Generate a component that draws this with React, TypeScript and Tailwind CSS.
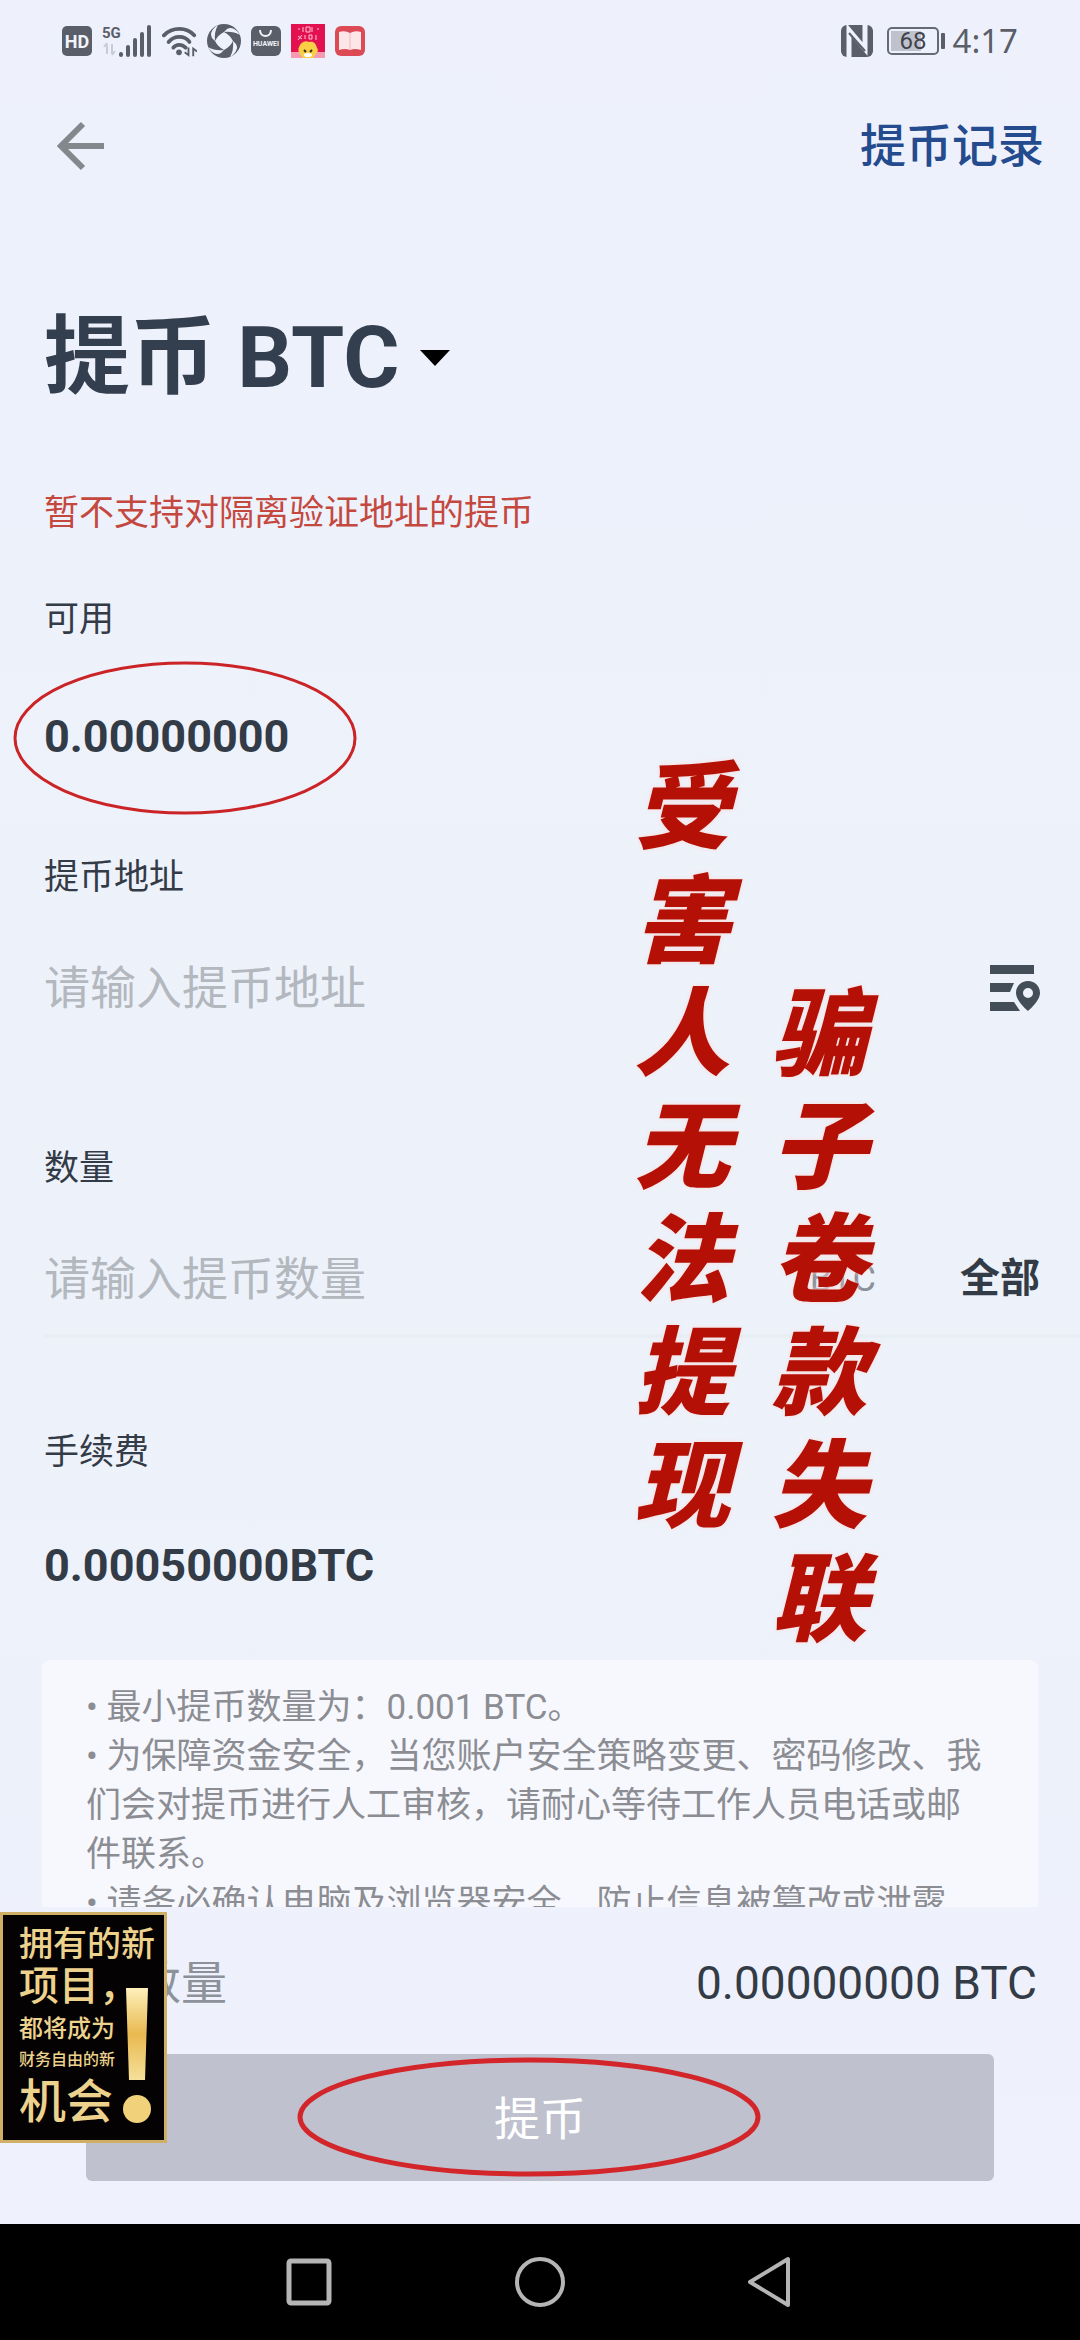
/**
 * Withdraw Page
 * Coin withdrawal form with notes, total and overlay annotations
 */

import type { ReactNode } from 'react'

const notes = [
  '最小提币数量为：0.001 BTC。',
  '为保障资金安全，当您账户安全策略变更、密码修改、我们会对提币进行人工审核，请耐心等待工作人员电话或邮件联系。',
  '请务必确认电脑及浏览器安全，防止信息被篡改或泄露',
]

function StatusBar() {
  return (
    <div className="flex items-center justify-between px-[62px] h-[82px] text-[#5a5e68]">
      <div className="flex items-center gap-[10px]">
        {/* HD */}
        <svg width="30" height="30" viewBox="0 0 30 30">
          <rect width="30" height="30" rx="5" fill="#5a5e68" />
          <text x="15" y="22" textAnchor="middle" fontSize="18" fontWeight="700" fill="#f2f4fc">HD</text>
        </svg>
        {/* 5G signal */}
        <svg width="50" height="34" viewBox="0 0 50 34">
          <text x="0" y="14" fontSize="15" fontWeight="700" fill="#5a5e68">5G</text>
          <path d="M5 20v10M2 23l3-4M10 20v10M13 27l-3 4" stroke="#c9ccd6" strokeWidth="2" fill="none" />
          <path d="M19 30v1M26 23v8M33 16v15M40 10v21M47 3v28" stroke="#5a5e68" strokeWidth="4" strokeLinecap="round" />
        </svg>
        {/* Wifi */}
        <svg width="35" height="34" viewBox="0 0 37 34">
          <g fill="none" stroke="#5a5e68" strokeWidth="4" strokeLinecap="round">
            <path d="M2 11C11 2 26 2 34 11" />
            <path d="M7 18c6-7 17-7 22 0" />
            <path d="M12 24c3-4 9-4 13 0" />
          </g>
          <circle cx="18" cy="29" r="3" fill="#5a5e68" />
          <path d="M28 24v8l-4-3M33 33v-8l4 3" stroke="#5a5e68" strokeWidth="2" fill="none" />
        </svg>
        {/* Shutter */}
        <svg width="34" height="34" viewBox="0 0 34 34">
          <circle cx="17" cy="17" r="17" fill="#5a5e68" />
          <g fill="#eef2fc">
            <path d="M17 8q6 3 9 9q-3 6-9 9q-6-3-9-9q3-6 9-9z" />
            <path d="M8 17Q7 8 11 1L8 3Q2 9 5 14z" />
            <path d="M17 8Q26 7 33 11L31 8Q25 2 20 5z" />
            <path d="M26 17Q27 26 23 33L26 31Q32 25 29 20z" />
            <path d="M17 26Q8 27 1 23L3 26Q9 32 14 29z" />
          </g>
        </svg>
        {/* Huawei store */}
        <svg width="30" height="30" viewBox="0 0 30 30">
          <rect width="30" height="30" rx="6" fill="#5a5e68" />
          <path d="M9 4c0 8 11 8 11 0" fill="none" stroke="#f2f4fc" strokeWidth="2" />
          <text x="15" y="20" textAnchor="middle" fontSize="7" fontWeight="700" fill="#f2f4fc">HUAWEI</text>
        </svg>
        {/* Shopping app */}
        <svg width="34" height="34" viewBox="0 0 34 34">
          <rect width="34" height="34" fill="#e3114f" />
          <path d="M7 5h2M12 3v5M15 3h4v5h-4zM21 3v5M26 5h2M7 12l4 3M11 11l-4 5M14 11v4M18 11h3v4h-3zM25 11v5" stroke="#ffc4d4" fill="none" />
          <path d="M0 28h34v6H0z" fill="#f59cb2" />
          <path d="M8 23c2-5 6-7 10-5 5-1 7 2 8 6 2 2 0 5-1 6l-3 4H12l-3-4c-2-2-2-5-1-7z" fill="#f9cf45" />
          <path d="M13 26l2 2M21 26l-2 2" stroke="#3b2a18" strokeWidth="2" />
          <ellipse cx="17" cy="31" rx="4" ry="2" fill="#fff" />
        </svg>
        {/* Reader */}
        <svg width="30" height="30" viewBox="0 0 30 30">
          <rect width="30" height="30" rx="6" fill="#dc4b55" />
          <path d="M4 6q6-2 11 1q5-3 11-1v18q-6-2-11 0q-5-2-11 0z" fill="#fde6e8" />
          <path d="M15 7v17" stroke="#f1b7bd" />
        </svg>
      </div>

      <div className="flex items-center">
        {/* NFC */}
        <svg width="32" height="32" viewBox="0 0 32 32" className="mr-[14px]">
          <rect width="32" height="32" rx="6" fill="#5a5e68" />
          <path d="M8 32V5l16 19V0" fill="none" stroke="#eef2fc" strokeWidth="5" />
          <path d="M8 8l16 18" stroke="#5a5e68" strokeWidth="2" />
        </svg>
        <svg width="60" height="28" viewBox="0 0 60 28" className="mr-[6px]">
          <rect x="1" y="1" width="50" height="26" rx="4" fill="none" stroke="#666a73" strokeWidth="2" />
          <rect x="4" y="4" width="30" height="20" fill="#bfc2cc" />
          <rect x="54" y="6" width="4" height="16" rx="1" fill="#5a5e68" />
          <text x="26" y="22" textAnchor="middle" fontSize="24" fill="#3f434b">68</text>
        </svg>
        <span className="font-['Noto_Sans',sans-serif] text-[33px] leading-[40px]">4:17</span>
      </div>
    </div>
  )
}

function Label({ htmlFor, children }: { htmlFor?: string; children: ReactNode }) {
  if (htmlFor) {
    return (
      <label htmlFor={htmlFor} className="block text-[35px] leading-[48px]">
        {children}
      </label>
    )
  }
  return <p className="text-[35px] leading-[48px]">{children}</p>
}

function PromoBanner() {
  return (
    <aside className="absolute left-0 -top-[142px] w-[167px] border-[3px] border-[#cfae66] bg-[#050203] pl-4 pt-[9px] pb-2 font-medium text-[#ecd28c]">
      <p className="text-[34px] leading-[40px] whitespace-nowrap">拥有的新</p>
      <p className="text-[40px] leading-[46px] whitespace-nowrap">项目，</p>
      <p className="text-[24px] leading-[38px] whitespace-nowrap">都将成为</p>
      <p className="text-[16px] leading-[24px] whitespace-nowrap">财务自由的新</p>
      <p className="text-[47px] leading-[60px] whitespace-nowrap">机会</p>
      <svg width="30" height="138" viewBox="0 0 30 138" className="absolute right-[12px] bottom-[16px]">
        <defs>
          <linearGradient id="gold" x1="0" y1="0" x2="0" y2="1">
            <stop offset="0" stopColor="#fff0bb" />
            <stop offset="0.5" stopColor="#e8b950" />
            <stop offset="1" stopColor="#f5e09a" />
          </linearGradient>
        </defs>
        <path d="M4 2h22l-3 92H7z" fill="url(#gold)" />
        <circle cx="15" cy="123" r="14" fill="#f1d27b" />
      </svg>
    </aside>
  )
}

export default function App() {
  return (
    <div
      lang="zh-CN"
      className="relative flex flex-col h-screen overflow-hidden bg-linear-to-b from-[#eef1fc] via-[#edf2fa] to-[#eff1fc] text-[#333b47] font-[Roboto,'Noto_Sans_CJK_SC',sans-serif]"
    >
      <StatusBar />

      <main className="flex-1 min-h-0 overflow-hidden px-[44px]">
        {/* Header */}
        <header className="flex items-center justify-between h-[128px] -mr-[8px]">
          <button aria-label="返回" className="ml-[12px]">
            <svg width="50" height="50" viewBox="0 0 50 50" fill="none" stroke="#83888c" strokeWidth="6">
              <path d="M48 25H6M27 3L5 25l22 22" />
            </svg>
          </button>
          <a href="#records" className="text-[46px] leading-[60px] font-medium text-[#234b8d]">
            提币记录
          </a>
        </header>

        <h1 className="mt-[98px]">
          <button className="flex items-center gap-5 text-[86px] leading-[100px] font-bold text-[#333f4e]">
            提币 BTC
            <svg width="30" height="16" viewBox="0 0 30 16">
              <path d="M0 0h30L15 16z" fill="#000" />
            </svg>
          </button>
        </h1>

        <p className="mt-[82px] text-[35px] leading-[48px] text-[#c5483f]">
          暂不支持对隔离验证地址的提币
        </p>

        {/* Balance */}
        <section className="mt-[58px]">
          <Label>可用</Label>
          <div className="relative mt-[63px]">
            <p className="text-[45px] leading-[60px] font-bold">0.00000000</p>
            <svg width="346" height="154" viewBox="0 0 346 154" className="absolute -left-[32px] -top-[46px]">
              <ellipse cx="173" cy="77" rx="170" ry="75" fill="none" stroke="#cb2427" strokeWidth="3" />
            </svg>
          </div>
        </section>

        {/* Address */}
        <section className="mt-[87px]">
          <Label htmlFor="address">提币地址</Label>
          <div className="flex items-center mt-[46px]">
            <input
              id="address"
              placeholder="请输入提币地址"
              className="flex-1 min-w-0 h-[80px] bg-transparent text-[46px] outline-none placeholder:text-[#b3b7be]"
            />
            <button aria-label="地址簿" className="-mr-1">
              <svg width="50" height="46" viewBox="0 0 50 46" fill="#444e59">
                <path d="M0 0h44v9H0zM0 18h24l-4 9H0zM0 37h24l6 9H0z" />
                <path
                  fillRule="evenodd"
                  d="M38 16c-7 0-12 5-12 12 0 8 12 18 12 18s12-10 12-18c0-7-5-12-12-12zm0 7a5 5 0 1 1 0 10a5 5 0 0 1 0-10z"
                />
              </svg>
            </button>
          </div>
        </section>

        {/* Amount */}
        <section className="mt-[117px]">
          <Label htmlFor="amount">数量</Label>
          <div className="flex items-center mt-[46px]">
            <input
              id="amount"
              placeholder="请输入提币数量"
              className="flex-1 min-w-0 h-[80px] bg-transparent text-[46px] outline-none placeholder:text-[#b3b7be]"
            />
            <span className="text-[36px] text-[#8b919b]">BTC</span>
            <button className="ml-[84px] -mr-1 text-[40px] leading-[60px] font-bold">全部</button>
          </div>
          <div className="mt-[15px] -mr-[44px] h-1 bg-[#e8eff4]" />
        </section>

        {/* Fee */}
        <section className="mt-[91px]">
          <Label>手续费</Label>
          <p className="mt-[59px] text-[45px] leading-[60px] font-bold">0.00050000BTC</p>
        </section>

        {/* Notes */}
        <ul className="mt-[64px] -mx-[2px] rounded-t-lg bg-[#f7f8fe] px-[44px] py-[23px] text-[35px] leading-[49px] text-[#8b8d93]">
          {notes.map((note) => (
            <li key={note}>• {note}</li>
          ))}
        </ul>
      </main>

      {/* Total and submit */}
      <footer className="relative">
        <div className="flex items-center justify-between px-[43px] pt-[46px] pb-[41px] text-[46px] leading-[60px]">
          <span className="text-[#8d929a]">到账数量</span>
          <span>0.00000000 BTC</span>
        </div>
        <div className="relative px-[86px] pb-[43px]">
          <button className="block w-full h-[127px] pt-1 rounded-md bg-[#bfc2ce] text-[46px] text-white">
            提币
          </button>
          <svg
            width="464"
            height="122"
            viewBox="0 0 464 122"
            className="pointer-events-none absolute left-[297px] top-[2px]"
          >
            <ellipse cx="232" cy="61" rx="229" ry="57" fill="none" stroke="#d3262a" strokeWidth="5" />
          </svg>
          <PromoBanner />
        </div>
      </footer>

      {/* System navigation */}
      <nav className="flex items-center justify-center gap-[180px] h-[116px] bg-black">
        <button aria-label="最近任务">
          <svg width="50" height="52" viewBox="0 0 50 52" fill="none" stroke="#b5b5b5" strokeWidth="5">
            <rect x="4" y="5" width="40" height="42" rx="2" />
          </svg>
        </button>
        <button aria-label="主屏幕">
          <svg width="50" height="52" viewBox="0 0 50 52" fill="none" stroke="#b5b5b5" strokeWidth="4">
            <circle cx="25" cy="26" r="23" />
          </svg>
        </button>
        <button aria-label="后退">
          <svg width="50" height="52" viewBox="0 0 50 52" fill="none" stroke="#b5b5b5" strokeWidth="4" strokeLinejoin="round">
            <path d="M43 3v46L5 26z" />
          </svg>
        </button>
      </nav>

      {/* Vertical captions over the form */}
      <p className="pointer-events-none absolute left-[634px] top-[753px] w-[96px] break-all text-[96px] leading-[113px] font-black italic text-[#b41006] text-shadow-[0_0_4px_#fbd9d6]">
        受害人无法提现
      </p>
      <p className="pointer-events-none absolute left-[771px] top-[979px] w-[96px] break-all text-[96px] leading-[113px] font-black italic text-[#b41006] text-shadow-[0_0_4px_#fbd9d6]">
        骗子卷款失联
      </p>
    </div>
  )
}
